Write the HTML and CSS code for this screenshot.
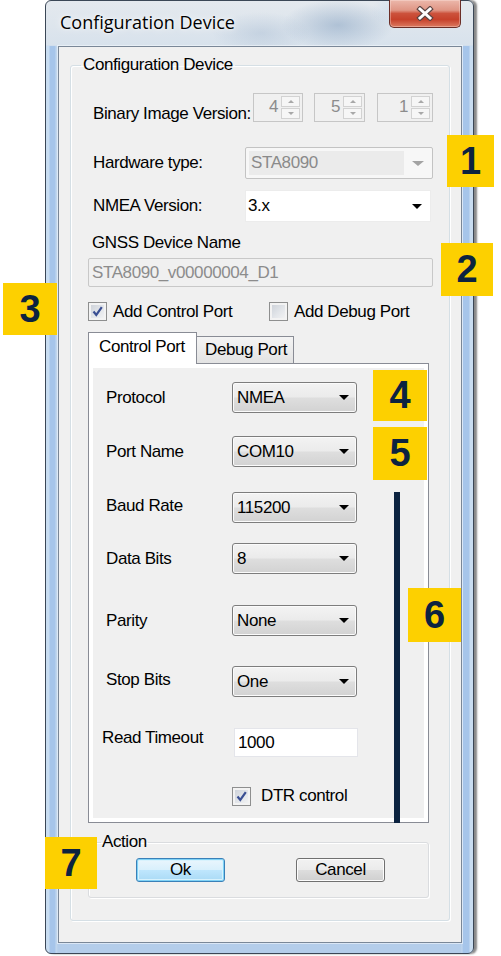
FILE: index.html
```html
<!DOCTYPE html>
<html lang="en">
<head>
<meta charset="utf-8">
<title>Configuration Device</title>
<link rel="stylesheet" href="styles.css">
</head>
<body>
<div class="window">
  <div class="titlebar">
    <span class="title">Configuration Device</span>
    <div class="close">
      <svg width="18" height="15" viewBox="0 0 18 15"><path d="M4 3 L14 12 M14 3 L4 12" stroke="#5b4442" stroke-width="5.2" stroke-linecap="square" fill="none"/><path d="M4 3 L14 12 M14 3 L4 12" stroke="#ffffff" stroke-width="3" stroke-linecap="square" fill="none"/></svg>
    </div>
  </div>
  <div class="client">
    <fieldset class="group main">
      <legend>Configuration Device</legend>

      <div class="row binary">
        <span class="lbl lbl-bin">Binary Image Version:</span>
        <div class="spin s1"><span class="val">4</span><span class="btns"><span class="up"></span><span class="dn"></span></span></div>
        <div class="spin s2"><span class="val">5</span><span class="btns"><span class="up"></span><span class="dn"></span></span></div>
        <div class="spin s3"><span class="val">1</span><span class="btns"><span class="up"></span><span class="dn"></span></span></div>
      </div>

      <div class="row hw">
        <span class="lbl">Hardware type:</span>
        <div class="ddl ddl-disabled"><span class="txt">STA8090</span><span class="arrow arrow-grey"></span></div>
      </div>

      <div class="row nmea">
        <span class="lbl">NMEA Version:</span>
        <div class="ddl ddl-white"><span class="txt">3.x</span><span class="arrow"></span></div>
      </div>

      <div class="caption">GNSS Device Name</div>
      <div class="textbox textbox-disabled">STA8090_v00000004_D1</div>

      <div class="row checks">
        <label class="check-item first"><span class="cb checked"><svg width="13" height="13" viewBox="0 0 13 13"><path d="M2.5 6.5 L5.3 10 L10.8 2.2" stroke="#3a4f93" stroke-width="2.2" fill="none"/></svg></span>Add Control Port</label>
        <label class="check-item"><span class="cb"></span>Add Debug Port</label>
      </div>

      <div class="tabs">
        <div class="tab active">Control Port</div>
        <div class="tab">Debug Port</div>
      </div>
      <div class="panel">
        <div class="panel-inner">
          <div class="prow">
            <span class="plbl">Protocol</span>
            <div class="combo"><span>NMEA</span><span class="arrow"></span></div>
          </div>
          <div class="prow">
            <span class="plbl">Port Name</span>
            <div class="combo"><span>COM10</span><span class="arrow"></span></div>
          </div>
          <div class="prow">
            <span class="plbl plbl-up">Baud Rate</span>
            <div class="combo"><span>115200</span><span class="arrow"></span></div>
          </div>
          <div class="prow">
            <span class="plbl">Data Bits</span>
            <div class="combo"><span>8</span><span class="arrow"></span></div>
          </div>
          <div class="prow">
            <span class="plbl">Parity</span>
            <div class="combo"><span>None</span><span class="arrow"></span></div>
          </div>
          <div class="prow">
            <span class="plbl plbl-up">Stop Bits</span>
            <div class="combo"><span>One</span><span class="arrow"></span></div>
          </div>
          <div class="prow prow-text">
            <span class="plbl plbl-timeout">Read Timeout</span>
            <div class="input">1000</div>
          </div>
          <div class="prow prow-check">
            <label class="check-item dtr"><span class="cb checked"><svg width="13" height="13" viewBox="0 0 13 13"><path d="M2.5 6.5 L5.3 10 L10.8 2.2" stroke="#3a4f93" stroke-width="2.2" fill="none"/></svg></span>DTR control</label>
          </div>
        </div>
      </div>

      <fieldset class="group action">
        <legend>Action</legend>
        <div class="buttons">
          <button class="btn btn-default">Ok</button>
          <button class="btn btn-cancel">Cancel</button>
        </div>
      </fieldset>
    </fieldset>
  </div>
</div>

<div class="badge b1">1</div>
<div class="badge b2">2</div>
<div class="badge b3">3</div>
<div class="badge b4">4</div>
<div class="badge b5">5</div>
<div class="badge b6">6</div>
<div class="badge b7">7</div>
<div class="marker-line"></div>
</body>
</html>
```

FILE: styles.css
```css
html, body {
  margin: 0;
  padding: 0;
}
body {
  width: 501px;
  height: 956px;
  position: relative;
  overflow: hidden;
  background: #ffffff;
  font-family: "Liberation Sans", Arial, sans-serif;
  font-size: 17px;
  letter-spacing: -0.4px;
  color: #000;
}

/* ---------- window chrome ---------- */
.window {
  margin-left: 45px;
  width: 429px;
  height: 954px;
  box-sizing: border-box;
  border: 1px solid #3b4756;
  border-radius: 6px;
  padding: 0 11px 10px 12px;
  display: flex;
  flex-direction: column;
  box-shadow: 3px 0 2px rgba(40, 40, 40, 0.55);
  background:
    radial-gradient(ellipse 80px 36px at 292px 24px, rgba(100, 135, 175, 0.38), rgba(100, 135, 175, 0) 70%),
    radial-gradient(ellipse 70px 30px at 215px 32px, rgba(140, 165, 195, 0.28), rgba(140, 165, 195, 0) 70%),
    radial-gradient(ellipse 50px 26px at 360px 10px, rgba(175, 200, 228, 0.45), rgba(175, 200, 228, 0) 70%),
    linear-gradient(to right, #c9ddf1 0, #c9ddf1 3px, #a6c5ea 4px, #a6c5ea 9px, #c3d8ee 10px, rgba(195, 216, 238, 0) 12px, rgba(195, 216, 238, 0) 415px, #c3d8ee 416px, #a6c5ea 417px, #a6c5ea 423px, #c9ddf1 424px) 0 45px / 100% 100% no-repeat,
    linear-gradient(to bottom, #e4e9ee 0, #d8e2ec 44px, #bcd3ec 46px, #b4cdea 100%);
}

.titlebar {
  height: 45px;
  flex: none;
  display: flex;
  justify-content: space-between;
  align-items: flex-start;
}
.title {
  font-family: "Open Sans", "Noto Sans", sans-serif;
  font-size: 18px;
  letter-spacing: 0;
  line-height: 24px;
  margin: 9px 0 0 2px;
  color: #000;
  text-shadow: 0 0 8px rgba(255, 255, 255, 0.95), 0 0 3px rgba(255, 255, 255, 0.9);
}
.close {
  width: 72px;
  height: 28px;
  box-sizing: border-box;
  margin: -1px 1px 0 0;
  border: 1px solid #6b2e27;
  border-top: none;
  border-radius: 0 0 5px 5px;
  background: linear-gradient(#ecb8ab 0%, #df9584 38%, #cc523c 50%, #c6412b 72%, #dc7a60 100%);
  box-shadow: inset 0 0 0 1px rgba(255, 235, 230, 0.35);
  display: flex;
  align-items: center;
  justify-content: center;
}

.client {
  width: 404px;
  height: 897px;
  box-sizing: border-box;
  border: 1px solid #7a8797;
  background: #f0f0f0;
  box-shadow: 0 0 0 1px rgba(255, 255, 255, 0.5);
  flex: none;
}

/* ---------- group boxes ---------- */
.group {
  border: 1px solid #d5dfe5;
  border-radius: 3px;
  box-shadow: inset 1px 1px 0 #ffffff, 1px 1px 0 #ffffff;
  min-inline-size: 0;
}
.group legend {
  line-height: 18px;
  font-size: 17px;
}
.main {
  margin: 9px 11px 0 11px;
  height: 865px;
  box-sizing: border-box;
  padding: 0 14px 0 17px;
}
.main > legend {
  padding: 0 2px;
  margin-left: -7px;
}

/* ---------- rows ---------- */
.row {
  display: flex;
}
.lbl {
  flex: none;
  width: 152px;
  margin-left: 5px;
  line-height: 20px;
  white-space: nowrap;
}
.binary {
  height: 29px;
  margin-top: 19px;
}
.lbl-bin {
  width: 160px;
  margin-top: 11px;
}
.spin {
  box-sizing: border-box;
  height: 29px;
  border: 1px solid #c6c6c6;
  background: #f0f0f0;
  display: flex;
  padding: 2px;
  flex: none;
}
.s1 { width: 50px; }
.s2 { width: 51px; margin-left: 11px; }
.s3 { width: 56px; margin-left: 12px; }
.spin .val {
  flex: 1;
  text-align: right;
  color: #8c8c8c;
  line-height: 22px;
  padding-right: 3px;
}
.spin .btns {
  width: 19px;
  display: flex;
  flex-direction: column;
  gap: 1px;
}
.spin .btns span {
  flex: 1;
  border: 1px solid #d2d2d2;
  background: #f6f6f6;
  display: flex;
  align-items: center;
  justify-content: center;
}
.spin .btns .up::after {
  content: "";
  border-left: 3px solid transparent;
  border-right: 3px solid transparent;
  border-bottom: 3px solid #a8a8a8;
}
.spin .btns .dn::after {
  content: "";
  border-left: 3px solid transparent;
  border-right: 3px solid transparent;
  border-top: 3px solid #a8a8a8;
}

.hw {
  margin-top: 25px;
  height: 32px;
  align-items: center;
}
.nmea {
  margin-top: 11px;
  height: 32px;
  align-items: center;
}
.ddl {
  box-sizing: border-box;
  height: 32px;
  display: flex;
  align-items: center;
  flex: none;
}
.ddl-disabled {
  width: 188px;
  border: 1px solid #c3c3c3;
  border-radius: 2px;
  background: #f7f7f7;
  padding: 3px;
}
.ddl-disabled .txt {
  width: 153px;
  height: 24px;
  line-height: 24px;
  padding-left: 2px;
  background: #ebebeb;
  color: #8a8a8a;
}
.ddl-white {
  width: 186px;
  border: 1px solid #ececec;
  background: #ffffff;
  padding-left: 2px;
}
.arrow {
  margin-left: auto;
  margin-right: 8px;
  width: 0;
  height: 0;
  border-left: 5px solid transparent;
  border-right: 5px solid transparent;
  border-top: 5px solid #000;
}
.arrow-grey {
  border-left-width: 6px;
  border-right-width: 6px;
  border-top: 5px solid #a3a3a3;
  margin-right: 5px;
}

.caption {
  margin: 11px 0 0 4px;
  line-height: 20px;
}
.textbox {
  box-sizing: border-box;
  margin-top: 5px;
  height: 29px;
  width: 345px;
  line-height: 27px;
  padding-left: 3px;
}
.textbox-disabled {
  border: 1px solid #c8c8c8;
  border-radius: 2px;
  background: #f0f0f0;
  color: #8c8c8c;
}

.checks {
  margin-top: 15px;
  height: 19px;
  align-items: center;
}
.check-item {
  display: flex;
  align-items: center;
  gap: 6px;
  line-height: 20px;
  white-space: nowrap;
}
.check-item.first {
  width: 181px;
}
.cb {
  flex: none;
  width: 19px;
  height: 19px;
  box-sizing: border-box;
  border: 1px solid #8e8f8f;
  background: linear-gradient(135deg, #c9ced6 0%, #e3e6ea 55%, #f6f6f6 100%);
  box-shadow: inset 0 0 0 2px #f3f3f3;
  display: flex;
  align-items: center;
  justify-content: center;
}

/* ---------- tabs ---------- */
.tabs {
  display: flex;
  align-items: flex-end;
  height: 32px;
  margin-top: 11px;
  margin-bottom: -1px;
  position: relative;
  z-index: 1;
}
.tab {
  box-sizing: border-box;
  border: 1px solid #898c95;
  white-space: nowrap;
}
.tab.active {
  width: 109px;
  height: 32px;
  border-bottom: none;
  background: #ffffff;
  padding-left: 10px;
  line-height: 28px;
}
.tab:not(.active) {
  width: 97px;
  height: 28px;
  border-left: none;
  background: linear-gradient(#f4f4f4, #e3e3e3);
  padding-left: 8px;
  line-height: 26px;
}
.panel {
  width: 341px;
  height: 460px;
  box-sizing: border-box;
  border: 1px solid #898c95;
  background: #ffffff;
  padding: 4px;
}
.panel-inner {
  height: 100%;
  background: #f0f0f0;
  padding-left: 13px;
  display: flex;
  flex-direction: column;
}
.prow {
  display: flex;
  align-items: center;
  height: 31px;
  flex: none;
}
.prow:nth-child(1) { margin-top: 14px; }
.prow:nth-child(2) { margin-top: 23px; }
.prow:nth-child(3) { margin-top: 25px; }
.prow:nth-child(4) { margin-top: 20px; }
.prow:nth-child(5) { margin-top: 31px; }
.prow:nth-child(6) { margin-top: 30px; }
.prow:nth-child(7) { margin-top: 31px; }
.prow:nth-child(8) { margin-top: 29px; }
.plbl {
  width: 126px;
  flex: none;
  line-height: 20px;
  white-space: nowrap;
}
.plbl-up {
  margin-top: -3px;
}
.prow-text {
  height: 29px;
  align-items: flex-start;
}
.plbl-timeout {
  margin-left: -4px;
  width: 131px;
}
.combo {
  box-sizing: border-box;
  width: 125px;
  height: 31px;
  border: 1px solid #7d7d7d;
  border-radius: 3px;
  background: linear-gradient(#f3f3f3 0%, #ebebeb 48%, #dedede 52%, #d2d2d2 100%);
  box-shadow: inset 0 0 0 1px #fbfbfb;
  display: flex;
  align-items: center;
  padding-left: 4px;
  flex: none;
}
.combo .arrow {
  margin-right: 7px;
}
.input {
  box-sizing: border-box;
  width: 124px;
  height: 29px;
  margin-left: 1px;
  border: 1px solid #e4e5ea;
  background: #ffffff;
  line-height: 27px;
  padding-left: 3px;
}
.prow-check {
  height: 20px;
  padding-left: 126px;
}
.dtr {
  gap: 10px;
}

/* ---------- action group ---------- */
.action {
  width: 341px;
  height: 65px;
  box-sizing: border-box;
  margin: 10px 0 0 0;
  padding: 0;
  border-color: #dadcdf;
}
.action > legend {
  padding: 0 1px;
  margin-left: 12px;
}
.buttons {
  display: flex;
  margin-top: 7px;
  padding-left: 47px;
}
.btn {
  width: 89px;
  height: 24px;
  box-sizing: border-box;
  border: 1px solid #707070;
  border-radius: 3px;
  padding: 0;
  font: inherit;
  letter-spacing: inherit;
  line-height: 22px;
  color: #000;
  background: linear-gradient(#f2f2f2 0%, #ebebeb 48%, #dddddd 52%, #cfcfcf 100%);
  box-shadow: inset 0 0 0 1px #fcfcfc;
}
.btn-default {
  border-color: #3a80b8;
  background: linear-gradient(#eaf6fd 0%, #d9f0fc 48%, #bee6fd 52%, #a9daf5 100%);
  box-shadow: inset 0 0 0 1px #7fd2f6, inset 0 0 0 2px #d8f2fd;
}
.btn-cancel {
  margin-left: 71px;
}

/* ---------- annotation overlays ---------- */
.badge {
  position: absolute;
  background: #fdd000;
  color: #0c2340;
  font-family: "Liberation Sans", Arial, sans-serif;
  font-weight: bold;
  font-size: 38px;
  letter-spacing: 0;
  display: flex;
  align-items: center;
  justify-content: center;
}
.b1 { left: 447px; top: 135px; width: 47px; height: 52px; }
.b2 { left: 441px; top: 243px; width: 52px; height: 53px; }
.b3 { left: 3px;   top: 283px; width: 54px; height: 52px; }
.b4 { left: 373px; top: 370px; width: 54px; height: 51px; }
.b5 { left: 373px; top: 427px; width: 54px; height: 53px; }
.b6 { left: 408px; top: 588px; width: 53px; height: 54px; }
.b7 { left: 45px;  top: 837px; width: 52px; height: 52px; }
.marker-line {
  position: absolute;
  left: 394px;
  top: 492px;
  width: 6px;
  height: 331px;
  background: #0c2340;
}
```
